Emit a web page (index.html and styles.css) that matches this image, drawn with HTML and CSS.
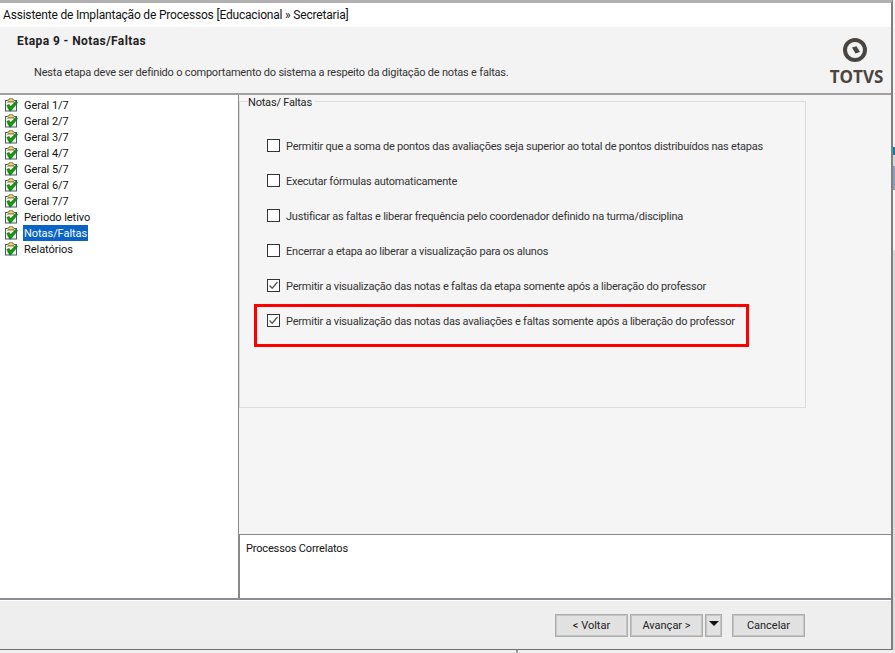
FILE: index.html
```html
<!DOCTYPE html>
<html lang="pt">
<head>
<meta charset="utf-8">
<title>Assistente de Implantação de Processos</title>
<link rel="stylesheet" href="styles.css">
</head>
<body>
<svg class="defs" width="0" height="0" aria-hidden="true">
  <symbol id="task" viewBox="0 0 16 16">
    <rect x="1.5" y="3.5" width="11" height="10.5" fill="#f7f3dc" stroke="#3f5f80"/>
    <rect x="3" y="5" width="8" height="1" fill="#c9bd8f"/>
    <path d="M4 3.5V2.5H5.5V1.5H8.5V2.5H10V4.5H4Z" fill="#e6cf86" stroke="#8c7a45" stroke-width=".8"/>
    <path d="M2.8 8.6L5 7.4L6.6 9.6L11.6 4.4L13.6 5.6L6.8 14L5.6 14Z" fill="#0b9a12" stroke="#06570a" stroke-width=".5"/>
  </symbol>
</svg>
<div class="screen">
  <div class="window">
    <div class="titlebar">Assistente de Implantação de Processos [Educacional » Secretaria]</div>
    <header class="wizard-head">
      <div class="head-text">
        <h1 class="step-title">Etapa 9 - Notas/Faltas</h1>
        <p class="step-desc">Nesta etapa deve ser definido o comportamento do sistema a respeito da digitação de notas e faltas.</p>
      </div>
      <div class="logo">
        <svg class="logo-mark" width="24" height="24" viewBox="0 0 24 24" aria-hidden="true">
          <circle cx="12" cy="12" r="10" fill="none" stroke="#4a4540" stroke-width="4"/>
          <path d="M9 9.5L13.5 8.3L17 14L12.5 15.5Z" fill="#4a4540"/>
        </svg>
        <span class="logo-name">TOTVS</span>
      </div>
    </header>
    <div class="wizard-body">
      <nav class="tree">
        <div class="tree-item"><svg class="tree-icon"><use href="#task"/></svg><span class="tree-label">Geral 1/7</span></div>
        <div class="tree-item"><svg class="tree-icon"><use href="#task"/></svg><span class="tree-label">Geral 2/7</span></div>
        <div class="tree-item"><svg class="tree-icon"><use href="#task"/></svg><span class="tree-label">Geral 3/7</span></div>
        <div class="tree-item"><svg class="tree-icon"><use href="#task"/></svg><span class="tree-label">Geral 4/7</span></div>
        <div class="tree-item"><svg class="tree-icon"><use href="#task"/></svg><span class="tree-label">Geral 5/7</span></div>
        <div class="tree-item"><svg class="tree-icon"><use href="#task"/></svg><span class="tree-label">Geral 6/7</span></div>
        <div class="tree-item"><svg class="tree-icon"><use href="#task"/></svg><span class="tree-label">Geral 7/7</span></div>
        <div class="tree-item"><svg class="tree-icon"><use href="#task"/></svg><span class="tree-label">Periodo letivo</span></div>
        <div class="tree-item"><svg class="tree-icon"><use href="#task"/></svg><span class="tree-label selected">Notas/Faltas</span></div>
        <div class="tree-item"><svg class="tree-icon"><use href="#task"/></svg><span class="tree-label">Relatórios</span></div>
      </nav>
      <main class="content">
        <div class="options-area">
          <section class="group">
            <span class="group-title">Notas/ Faltas</span>
            <div class="option"><span class="check"></span><span class="option-text">Permitir que a soma de pontos das avaliações seja superior ao total de pontos distribuídos nas etapas</span></div>
            <div class="option"><span class="check"></span><span class="option-text">Executar fórmulas automaticamente</span></div>
            <div class="option"><span class="check"></span><span class="option-text">Justificar as faltas e liberar frequência pelo coordenador definido na turma/disciplina</span></div>
            <div class="option"><span class="check"></span><span class="option-text">Encerrar a etapa ao liberar a visualização para os alunos</span></div>
            <div class="option"><span class="check"><svg width="11" height="11" viewBox="0 0 11 11" aria-hidden="true"><path d="M1.5 5.5L4.2 8.2L9.5 2" fill="none" stroke="#555" stroke-width="1.3"/></svg></span><span class="option-text">Permitir a visualização das notas e faltas da etapa somente após a liberação do professor</span></div>
            <div class="option"><span class="check"><svg width="11" height="11" viewBox="0 0 11 11" aria-hidden="true"><path d="M1.5 5.5L4.2 8.2L9.5 2" fill="none" stroke="#555" stroke-width="1.3"/></svg></span><span class="option-text">Permitir a visualização das notas das avaliações e faltas somente após a liberação do professor</span></div>
            <div class="highlight"></div>
          </section>
        </div>
        <div class="related">Processos Correlatos</div>
      </main>
    </div>
    <footer class="wizard-foot">
      <button class="btn">&lt; Voltar</button>
      <button class="btn btn-next">Avançar &gt;</button>
      <button class="btn btn-menu"><span class="caret"></span></button>
      <button class="btn btn-cancel">Cancelar</button>
    </footer>
  </div>
  <div class="edge">
    <i class="edge-a"></i><i class="edge-b"></i><i class="edge-c"></i><i class="edge-d"></i><i class="edge-e"></i><i class="edge-f"></i>
  </div>
</div>
<div class="under"><i class="under-line"></i></div>
</body>
</html>
```
FILE: styles.css
```css
* { box-sizing: border-box; }
html, body { margin: 0; height: 100%; overflow: hidden; }
body {
  background: #f0f0f0;
  color: #1e1e1e;
  font-family: Roboto, "Open Sans", sans-serif;
  font-size: 11px;
  display: flex;
  flex-direction: column;
}
.defs { position: absolute; }
.screen { display: flex; height: 650px; }
.window {
  width: 893px;
  height: 650px;
  display: flex;
  flex-direction: column;
  background: #f5f5f5;
  border-top: 3px solid #b0b0b0;
  border-right: 2px solid #7f7f7f;
  border-bottom: 1px solid #6f6f6f;
}
.titlebar {
  height: 24px;
  background: #fff;
  padding: 4px 0 0 3px;
  font-size: 12px;
  line-height: 16px;
  letter-spacing: -0.19px;
  color: #111;
  white-space: nowrap;
}
.wizard-head {
  height: 68px;
  background: #f3f3f3;
  border-bottom: 2px solid #a0a0a0;
  display: flex;
  justify-content: space-between;
}
.head-text { padding: 7px 0 0 17px; }
.step-title { margin: 0; font-size: 12px; line-height: 15px; font-weight: 700; letter-spacing: 0.42px; color: #222; }
.step-desc { margin: 16px 0 0 17px; line-height: 15px; letter-spacing: -0.2px; color: #333; }
.logo {
  width: 63px;
  padding-top: 11px;
  margin-right: 3px;
  display: flex;
  flex-direction: column;
  align-items: center;
  color: #4a4540;
}
.logo-mark { display: block; flex: none; margin-right: 4px; }
.logo-name { font-family: "Open Sans", sans-serif; font-size: 17px; line-height: 20px; font-weight: 700; margin-top: 5px; }
.wizard-body { flex: 1; display: flex; min-height: 0; border-bottom: 2px solid #8a8d94; }
.tree { width: 238px; flex: none; background: #fff; padding-top: 2px; }
.tree-item { height: 16px; display: flex; align-items: center; gap: 3px; padding-left: 4px; white-space: nowrap; }
.tree-icon { width: 16px; height: 16px; flex: none; }
.tree-label { padding: 0 1px; height: 16px; line-height: 17px; letter-spacing: -0.05px; color: #111; }
.tree-label.selected { background: #0a64c8; color: #fff; }
.content { flex: 1; display: flex; flex-direction: column; min-width: 0; border-left: 1px solid #888; }
.options-area { flex: 1; padding-top: 6px; }
.group {
  position: relative;
  width: 567px;
  height: 307px;
  border: 1px solid #dcdcdc;
  padding-top: 26px;
  padding-left: 27px;
}
.group-title {
  position: absolute;
  top: -7px;
  left: 8px;
  background: #f5f5f5;
  padding-right: 3px;
  line-height: 15px;
  letter-spacing: -0.2px;
  color: #222;
}
.option { height: 35px; display: flex; align-items: center; gap: 6px; white-space: nowrap; color: #333; }
.option-text { padding-top: 2px; letter-spacing: -0.22px; }
.check {
  width: 13px;
  height: 13px;
  flex: none;
  border: 1px solid #333;
  background: #fff;
  display: flex;
  align-items: center;
  justify-content: center;
}
.check svg { display: block; flex: none; }
.highlight {
  position: absolute;
  left: 14px;
  top: 202px;
  width: 495px;
  height: 43px;
  border: 3px solid #ff0000;
}
.related {
  height: 64px;
  background: #fff;
  border-top: 1px solid #888;
  border-left: 1px solid #888;
  padding: 6px 0 0 6px;
  line-height: 15px;
  letter-spacing: -0.16px;
  color: #111;
}
.wizard-foot {
  height: 49px;
  background: #eeeeee;
  border-top: 1px solid #fff;
  display: flex;
  align-items: flex-start;
  padding: 13px 0 0 555px;
}
.btn {
  height: 23px;
  width: 73px;
  padding: 0 0 1px;
  border: 1px solid #adadad;
  outline: 1px solid #c4c4c4;
  outline-offset: -2px;
  background: #e1e1e1;
  color: #222;
  font: inherit;
  line-height: 19px;
  flex: none;
}
.btn-next { margin-left: 2px; }
.btn-menu { width: 17px; margin-left: 2px; display: flex; justify-content: center; padding-top: 6px; }
.caret { width: 0; height: 0; border: 5px solid transparent; border-top: 5px solid #111; border-bottom: 0; }
.btn-cancel { margin-left: 10px; }
.edge { width: 2px; height: 650px; display: flex; flex-direction: column; background: #f4f4f4; }
.edge i { display: block; width: 100%; }
.edge-a { height: 147px; background: #f4f4f4; }
.edge-b { height: 8px; background: #0a83ad; }
.edge-c { height: 11px; background: #d8d8d8; }
.edge-d { height: 24px; background: #8f9fb8; }
.edge-e { height: 60px; background: #f4f4f4; }
.edge-f { height: 400px; background: #dcdcdc; }
.under { height: 3px; background: #efefef; padding-left: 516px; }
.under-line { display: block; width: 2px; height: 3px; background: #9a9a9a; }
```
